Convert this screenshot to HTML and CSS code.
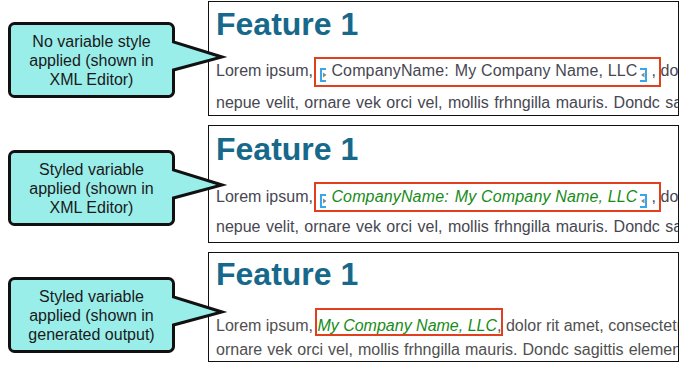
FILE: index.html
```html
<!DOCTYPE html>
<html lang="en">
<head>
  <meta charset="UTF-8">
  <meta name="viewport" content="width=device-width, initial-scale=1.0">
  <title>Variable styles</title>
  <link rel="stylesheet" href="styles.css">
</head>
<body>
  <div class="figure">

    <div class="row">
      <div class="callout">
        <svg class="callout-shape" width="224" height="76" viewBox="0 0 224 76">
          <path d="M6.5 1.5 H160.5 A5 5 0 0 1 165.5 6.5 V20 L214 35 L165.5 48 V69.5 A5 5 0 0 1 160.5 74.5 H6.5 A5 5 0 0 1 1.5 69.5 V6.5 A5 5 0 0 1 6.5 1.5 Z"/>
        </svg>
        <p class="callout-text">No variable style<br>applied (shown in<br>XML Editor)</p>
      </div>
      <div class="panel panel--plain">
        <h2 class="panel-title">Feature 1</h2>
        <div class="line line-1">Lorem ipsum, <span class="var-box"><svg class="mark" width="14" height="14" viewBox="0 0 14 14"><path class="mark-bracket" d="M9 1 H4 V13 H9"/><polygon class="mark-arrow" points="6,4.5 9.5,7 6,9.5"/></svg>CompanyName:&#8202; My Company Name, LLC<svg class="mark" width="14" height="14" viewBox="0 0 14 14"><polygon class="mark-arrow" points="7.5,4.5 4,7 7.5,9.5"/><path class="mark-bracket" d="M3 1 H9 V13 H3"/></svg>,</span> dolor rit amet, consectetur adipiscing elit</div>
        <div class="line line-2">nepue velit, ornare vek orci vel, mollis frhngilla mauris. Dondc sagittis elementum</div>
      </div>
    </div>

    <div class="row">
      <div class="callout callout--low">
        <svg class="callout-shape" width="224" height="76" viewBox="0 0 224 76">
          <path d="M6.5 1.5 H160.5 A5 5 0 0 1 165.5 6.5 V20 L214 35 L165.5 48 V69.5 A5 5 0 0 1 160.5 74.5 H6.5 A5 5 0 0 1 1.5 69.5 V6.5 A5 5 0 0 1 6.5 1.5 Z"/>
        </svg>
        <p class="callout-text">Styled variable<br>applied (shown in<br>XML Editor)</p>
      </div>
      <div class="panel panel--styled">
        <h2 class="panel-title">Feature 1</h2>
        <div class="line line-1">Lorem ipsum, <span class="var-box"><svg class="mark" width="14" height="14" viewBox="0 0 14 14"><path class="mark-bracket" d="M9 1 H4 V13 H9"/><polygon class="mark-arrow" points="6,4.5 9.5,7 6,9.5"/></svg><em class="var-text">CompanyName:&#8202; My Company Name, LLC</em><svg class="mark" width="14" height="14" viewBox="0 0 14 14"><polygon class="mark-arrow" points="7.5,4.5 4,7 7.5,9.5"/><path class="mark-bracket" d="M3 1 H9 V13 H3"/></svg>,</span> dolor rit amet, consectetur adipiscing elit</div>
        <div class="line line-2">nepue velit, ornare vek orci vel, mollis frhngilla mauris. Dondc sagittis elementum</div>
      </div>
    </div>

    <div class="row">
      <div class="callout callout--low">
        <svg class="callout-shape" width="224" height="76" viewBox="0 0 224 76">
          <path d="M6.5 1.5 H160.5 A5 5 0 0 1 165.5 6.5 V20 L214 35 L165.5 48 V69.5 A5 5 0 0 1 160.5 74.5 H6.5 A5 5 0 0 1 1.5 69.5 V6.5 A5 5 0 0 1 6.5 1.5 Z"/>
        </svg>
        <p class="callout-text">Styled variable<br>applied (shown in<br>generated output)</p>
      </div>
      <div class="panel panel--output">
        <h2 class="panel-title">Feature 1</h2>
        <div class="line line-1">Lorem ipsum, <span class="var-box"><em class="var-text">My Company Name, LLC</em>,</span> dolor rit amet, consectetur adipiscing elit</div>
        <div class="line line-2">ornare vek orci vel, mollis frhngilla mauris. Dondc sagittis elementum</div>
      </div>
    </div>

  </div>
</body>
</html>
```

FILE: styles.css
```css
body {
  margin: 0;
  background: #fff;
  font-family: "Liberation Sans", Arial, sans-serif;
}

.figure {
  display: flex;
  flex-direction: column;
  gap: 9px;
  padding-top: 1px;
  width: 690px;
}

.row {
  display: grid;
  grid-template-columns: 208px 471px;
  align-items: start;
}

/* callouts */
.callout {
  position: relative;
  z-index: 1;
  width: 167px;
  height: 76px;
  margin: 21px 0 0 8px;
}

.callout--low {
  margin-top: 25px;
}

.callout-shape {
  position: absolute;
  left: 0;
  top: 0;
  overflow: visible;
}

.callout-shape path {
  fill: #9aeeea;
  stroke: #111;
  stroke-width: 3;
  stroke-linejoin: miter;
  stroke-miterlimit: 10;
}

.callout-text {
  position: relative;
  display: flex;
  align-items: center;
  justify-content: center;
  height: 100%;
  margin: 0;
  font-size: 16px;
  line-height: 19px;
  text-align: center;
  color: #1a1a1a;
}

/* editor panels */
.panel {
  box-sizing: border-box;
  border: 1px solid #111;
  padding-left: 7px;
  overflow: hidden;
  background: #fff;
}

.panel--plain { height: 115px; padding-top: 4px; }
.panel--styled { height: 118px; padding-top: 5px; }
.panel--output { height: 110px; padding-top: 3px; }

.panel-title {
  margin: 0;
  font-size: 32px;
  line-height: 36px;
  font-weight: bold;
  color: #17698b;
}

.line {
  font-size: 16px;
  line-height: 26px;
  white-space: nowrap;
  color: #474752;
}

.line-2 {
  word-spacing: 1px;
}

.panel--plain .line-1 { margin-top: 16px; }
.panel--plain .line-2 { margin-top: 6px; }
.panel--styled .line-1 { margin-top: 17px; }
.panel--styled .line-2 { margin-top: 4px; }
.panel--output .line { line-height: 24px; color: #505050; }
.panel--output .line-1 { margin-top: 22px; }
.panel--output .line-2 { margin-top: 0; word-spacing: 0.6px; }

.var-box {
  position: relative;
}

.panel--plain .var-box,
.panel--styled .var-box {
  letter-spacing: 0.15px;
}

.var-box::after {
  content: "";
  position: absolute;
  left: -3px;
  right: -5px;
  top: -5px;
  bottom: -8px;
  border: 2px solid #e0401e;
}

.panel--styled .var-box::after { top: -6px; bottom: -7px; }
.panel--output .var-box::after { left: -2px; right: -2px; top: -9px; bottom: -2px; }

.var-text {
  color: #178c17;
}

.mark {
  vertical-align: -6px;
}

.mark-bracket {
  fill: none;
  stroke: #38a6e8;
  stroke-width: 2;
}

.mark-arrow {
  fill: #8a8a8a;
}
```
